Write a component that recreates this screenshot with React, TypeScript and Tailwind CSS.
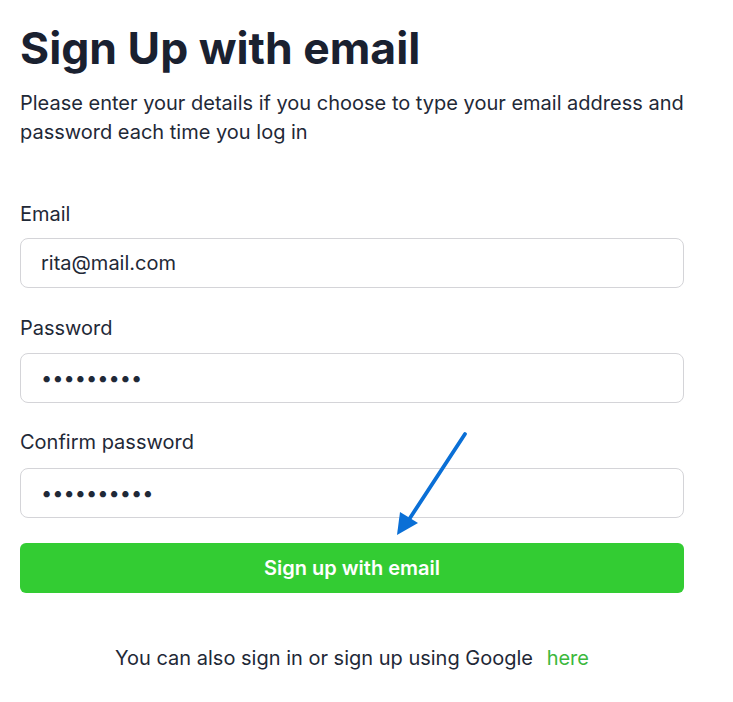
export default function App() {
  return (
    <div className="relative min-h-[702px] w-[733px] bg-white font-['Inter',sans-serif] text-[#1f2937]">
      <div className="w-[664px] ml-5 pt-[18px]">
        <h1 className="text-[44.5px] font-bold leading-[60px] text-[#1a2130]">Sign Up with email</h1>
        <p className="mt-[11px] text-[20px] leading-[29px] text-[#1f2937]">
          Please enter your details if you choose to type your email address and password each time you log in
        </p>

        <form className="mt-[53px] flex flex-col">
          <label className="text-[20px] leading-[28px]">Email</label>
          <input
            type="text"
            defaultValue="rita@mail.com"
            className="mt-[10px] h-[50px] rounded-lg border border-[#d4d4d8] px-5 text-[20px] text-[#1f2937] outline-none"
          />

          <label className="mt-[26px] text-[20px] leading-[28px]">Password</label>
          <input
            type="password"
            defaultValue="123456789"
            className="mt-[11px] h-[50px] rounded-lg border border-[#d4d4d8] px-5 text-[20px] text-[#1f2937] outline-none"
          />

          <label className="mt-[25px] text-[20px] leading-[28px]">Confirm password</label>
          <input
            type="password"
            defaultValue="1234567890"
            className="mt-[12px] h-[50px] rounded-lg border border-[#d4d4d8] px-5 text-[20px] text-[#1f2937] outline-none"
          />

          <button
            type="button"
            className="mt-[25px] h-[50px] rounded-md bg-[#33cc33] text-[20px] font-semibold text-white"
          >
            Sign up with email
          </button>
        </form>

        <p className="mt-[51px] text-center text-[20px] leading-[28px] text-[#1f2937]">
          You can also sign in or sign up using Google <span className="ml-2 text-[#3cb83c]">here</span>
        </p>
      </div>

      {/* annotation arrow */}
      <svg className="absolute left-[390px] top-[428px]" width="90" height="110" viewBox="0 0 90 110">
        <line x1="75" y1="6" x2="20" y2="90" stroke="#0a6fd6" strokeWidth="3.8" strokeLinecap="round" />
        <polygon points="7,107 10,84 28,95" fill="#0a6fd6" />
      </svg>
    </div>
  )
}
